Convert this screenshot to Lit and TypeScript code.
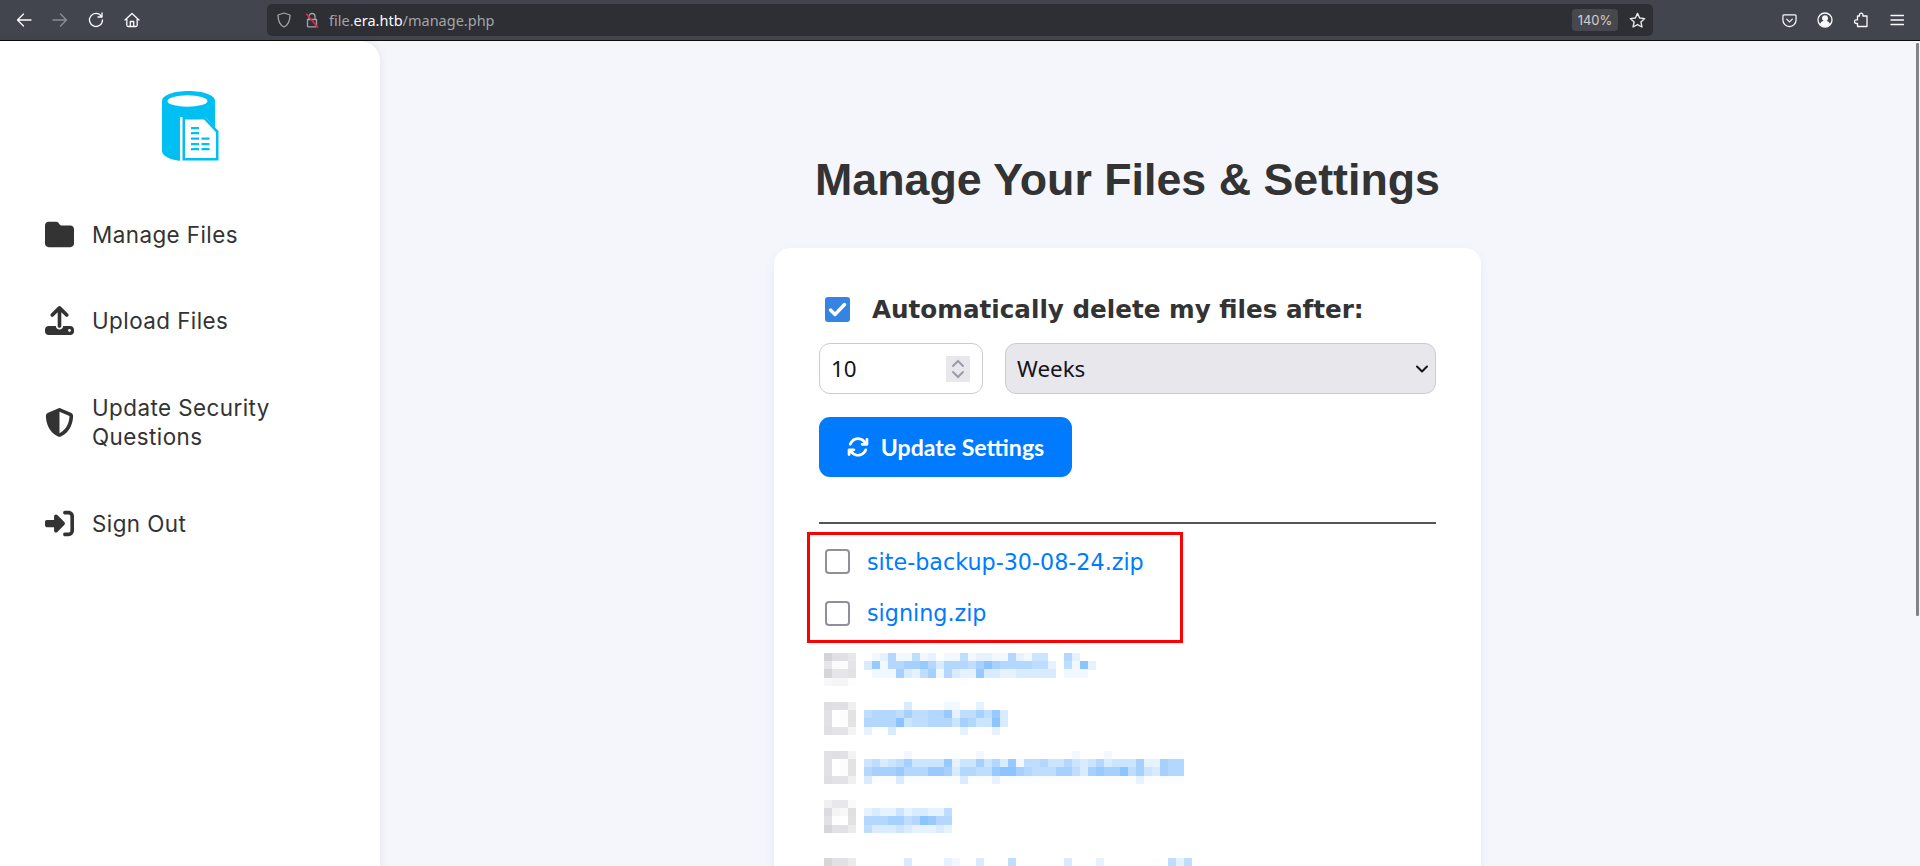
import { LitElement, html, css, svg } from "lit";
import { customElement } from "lit/decorators.js";

const FA = {
  folder: "M64 480H448c35.3 0 64-28.7 64-64V160c0-35.3-28.7-64-64-64H288c-10.1 0-19.6-4.7-25.6-12.8L243.2 57.6C231.1 41.5 212.1 32 192 32H64C28.7 32 0 60.7 0 96V416c0 35.3 28.7 64 64 64z",
  upload: "M288 109.3V352c0 17.7-14.3 32-32 32s-32-14.3-32-32V109.3l-73.4 73.4c-12.5 12.5-32.8 12.5-45.3 0s-12.5-32.8 0-45.3l128-128c12.5-12.5 32.8-12.5 45.3 0l128 128c12.5 12.5 12.5 32.8 0 45.3s-32.8 12.5-45.3 0L288 109.3zM64 352H192c0 35.3 28.7 64 64 64s64-28.7 64-64H448c35.3 0 64 28.7 64 64v32c0 35.3-28.7 64-64 64H64c-35.3 0-64-28.7-64-64V416c0-35.3 28.7-64 64-64zM432 456a24 24 0 1 0 0-48 24 24 0 1 0 0 48z",
  shield: "M256 0c4.6 0 9.2 1 13.4 2.9L457.7 82.8c22 9.3 38.4 31 38.3 57.2c-.5 99.2-41.3 280.7-213.6 363.2c-16.7 8-36.1 8-52.8 0C57.3 420.7 16.5 239.2 16 140c-.1-26.2 16.3-47.9 38.3-57.2L242.7 2.9C246.8 1 251.4 0 256 0zm0 66.8V444.8C394 378 431.1 230.1 432 141.4L256 66.8l0 0z",
  signout: "M217.9 105.9L340.7 228.7c7.2 7.2 11.3 17.1 11.3 27.3s-4.1 20.1-11.3 27.3L217.9 406.1c-6.4 6.4-15 9.9-24 9.9c-18.7 0-33.9-15.2-33.9-33.9l0-62.1L32 320c-17.7 0-32-14.3-32-32l0-64c0-17.7 14.3-32 32-32l128 0 0-62.1c0-18.7 15.2-33.9 33.9-33.9c9 0 17.6 3.6 24 9.9zM352 416l64 0c17.7 0 32-14.3 32-32l0-256c0-17.7-14.3-32-32-32l-64 0c-17.7 0-32-14.3-32-32s14.3-32 32-32l64 0c53 0 96 43 96 96l0 256c0 53-43 96-96 96l-64 0c-17.7 0-32-14.3-32-32s14.3-32 32-32z",
  sync: "M105.1 202.6c7.7-21.8 20.2-42.3 37.8-59.8c62.5-62.5 163.8-62.5 226.3 0L386.3 160H352c-17.7 0-32 14.3-32 32s14.3 32 32 32H463.5c0 0 0 0 0 0h.4c17.7 0 32-14.3 32-32V80c0-17.7-14.3-32-32-32s-32 14.3-32 32v35.2L414.4 97.6c-87.5-87.5-229.3-87.5-316.8 0C73.2 122 55.6 150.7 44.8 181.4c-5.9 16.7 2.9 34.9 19.5 40.8s34.9-2.9 40.8-19.5zM39 289.3c-5 1.5-9.8 4.2-13.7 8.2c-4 4-6.7 8.8-8.1 14c-.3 1.2-.6 2.5-.8 3.8c-.3 1.7-.4 3.4-.4 5.1V432c0 17.7 14.3 32 32 32s32-14.3 32-32V396.9l17.6 17.5 0 0c87.5 87.4 229.3 87.4 316.7 0c24.4-24.4 42.1-53.1 52.9-83.7c5.9-16.7-2.9-34.9-19.5-40.8s-34.9 2.9-40.8 19.5c-7.7 21.8-20.2 42.3-37.8 59.8c-62.5 62.5-163.8 62.5-226.3 0l-.1-.1L125.6 352H160c17.7 0 32-14.3 32-32s-14.3-32-32-32H48.4c-1.6 0-3.2 .1-4.8 .3s-3.1 .5-4.6 1z",
};

// One censored file row: y offset inside the mosaic, gray box tiles, blue intensity lines.
interface Blur { y: number; box: string[][]; text: string[]; }
const g = (s: string) => s.split(" ").map((c) => "#" + c);
const BLURS: Blur[] = [
  { y: 0,
    box: [g("d4d3d8 e0dfe3 e0dfe3 e8e8ea"), g("e6e6e8 fafafa fcfcfc e4e4e6"), g("d6d5da e6e6e8 e6e6e8 e2e2e4"), g("f8f8f8 f5f5f5 f5f5f5 fdfdfd")],
    text: ["012611512011512211621440062", "38166778636665797666655205192", "0111732571632283322333330111", "0000.0000000.00000000000"] },
  { y: 49,
    box: [g("dfdee2 e0dfe3 e0dfe3 f0f0f0"), g("e2e2e4 ffffff fcfcfc e3e3e5"), g("e2e2e4 ffffff fcfcfc e3e3e5"), g("e0e0e3 e4e4e6 e4e4e6 f4f4f4")],
    text: ["000003000011002000", "566657556682557583", "666694556664764493", "200300000000200.20"] },
  { y: 98,
    box: [g("e2e1e4 e0dfe3 e2e1e4 f3f3f3"), g("e2e2e4 ffffff fcfcfc e3e3e5"), g("e2e2e4 ffffff fcfcfc e3e3e5"), g("dfdee2 e3e3e5 e3e3e5 f0f0f0")],
    text: ["0000010000..0010000.000000100010000000..", "4534574444824474638155644643463444722766", "6777866688736655899765557753787795743766", "3...3.......3...2.................2....."] },
  { y: 147,
    box: [g("f0f0f0 e8e8ea e8e8ea fafafa"), g("dcdce0 f4f4f4 f8f8f8 e0e0e3"), g("e2e2e4 fdfdfd ffffff e2e2e4"), g("d6d5da e2e2e4 e2e2e4 ebebec")],
    text: ["", "23224233225", "66677569866", "53334322232"] },
  { y: 205,
    box: [g("d6d5da e2e1e4 e2e1e4 ebebec")],
    text: ["00000300002100300050000003000" + "2" + "000000" + ".0525"] },
];
const blue = (ch: string) => {
  const a = ch === "." ? 0.015 : Number(ch) * 0.05;
  return `rgb(${Math.round(255 * (1 - a))},${Math.round(255 - 132 * a)},255)`;
};

@customElement("blur-list")
class BlurList extends LitElement {
  static styles = css`:host{display:block;height:213px} svg{display:block}`;
  render() {
    const tile = 8, h = 8.17;
    return html`<svg width="632" height="213" viewBox="0 0 632 213" shape-rendering="crispEdges">
      ${BLURS.map((b) => svg`
        ${b.box.map((line, r) => line.map((c, i) => svg`<rect x=${i * tile} y=${b.y + r * h} width=${tile} height=${h + 0.2} fill=${c}></rect>`))}
        ${b.text.map((line, r) => [...line].map((c, i) => c === "0" ? null : svg`<rect x=${40 + i * tile} y=${b.y + r * h} width=${tile} height=${h + 0.2} fill=${blue(c)}></rect>`))}
      `)}
    </svg>`;
  }
}

@customElement("app-root")
export class AppRoot extends LitElement {
  static styles = css`
    :host { display:flex; flex-direction:column; width:1920px; height:866px; overflow:hidden; background:#f4f6fb; position:relative; font-family:"Inter",sans-serif; }
    .chrome { flex:none; height:40px; background:#42454e; border-bottom:1px solid #0c0c0d; display:flex; align-items:center; color:#fbfbfe; }
    .chrome svg { display:block; fill:none; stroke:currentColor; stroke-width:1.3; stroke-linecap:round; stroke-linejoin:round; }
    .nav { display:flex; width:267px; flex:none; padding-left:16px; box-sizing:border-box; gap:20px; }
    .dim { color:#8b8d94; }
    .url { width:1386px; height:32px; flex:none; background:#2e2f34; border-radius:5px; display:flex; align-items:center; font:14.5px "Noto Sans",sans-serif; color:#a3a4a8; box-sizing:border-box; padding-left:9px; }
    .url .sh { margin-right:12px; }
    .url .lk { margin-right:9px; }
    .url b { font-weight:400; color:#fbfbfe; }
    .url .sp { flex:1; }
    .zoom { width:46px; height:22px; background:#47484e; border-radius:4px; font:13px "Inter",sans-serif; color:#cfcfd2; display:flex; align-items:center; justify-content:center; margin-right:11px; }
    .url .star { margin-right:7px; color:#e8e8ea; }
    .tools { flex:1; display:flex; align-items:center; padding-left:129px; gap:20px; }
    .body { flex:1; display:flex; min-height:0; }
    aside { flex:none; width:380px; background:#fff; border-top-right-radius:20px; box-shadow:0 0 10px rgba(0,0,0,.08); box-sizing:border-box; padding:50px 0 0 45px; height:860px; color:#333; }
    .logo { display:block; margin:0 0 0 117px; }
    .menu { display:flex; flex-direction:column; margin-top:59px; }
    .item { display:flex; align-items:center; gap:18px; font-size:22.4px; letter-spacing:.45px; line-height:29px; color:#333; }
    .item svg { width:29px; height:29px; fill:#333; flex:none; }
    .item span { width:240px; }
    .m1 { margin-bottom:57px; }
    .m2 { margin-bottom:58px; }
    .m3 { margin-bottom:58px; }
    main { flex:1; padding:0 45px 0 0; display:flex; flex-direction:column; align-items:center; min-width:0; }
    h1 { flex:none; margin:112px 0 0; font:700 44.75px/52px "Liberation Sans",sans-serif; color:#333; height:95px; }
    .card { position:relative; width:707px; height:800px; flex:none; background:#fff; border-radius:16px; box-shadow:0 4px 12px rgba(0,0,0,.05); box-sizing:border-box; padding:49px 45px 0; }
    .auto { display:flex; align-items:center; height:25px; padding-left:6px; gap:22px; font:700 24.64px "DejaVu Sans",sans-serif; color:#333; white-space:nowrap; }
    .cb { width:25px; height:25px; box-sizing:border-box; border-radius:3px; flex:none; }
    .cb.on { background:#3584e4; display:flex; align-items:center; justify-content:center; }
    .cb.off { border:2px solid #8f8f9d; background:#fff; border-radius:4px; }
    .inputs { display:flex; gap:22px; margin-top:21px; }
    .num,.sel { height:51px; box-sizing:border-box; border:1px solid #ccc; border-radius:11px; display:flex; align-items:center; font:22.4px "Noto Sans",sans-serif; color:#15141a; }
    .num { width:164px; background:#fff; padding:0 12px 0 11px; justify-content:space-between; }
    .spin { width:24px; height:26px; background:#e8e8ec; display:block; }
    .sel { flex:1; background:#e8e8ec; padding:0 5px 0 11px; justify-content:space-between; }
    .btn { margin-top:23px; width:253px; height:60px; background:#007bff; border-radius:11px; color:#fff; display:flex; align-items:center; justify-content:center; gap:12px; font:700 23.1px "Lato",sans-serif; box-sizing:border-box; }
    .btn svg { width:22px; height:22px; fill:#fff; }
    hr { margin:45px 0 0; border:0; height:2px; background:#555; }
    .files { margin-top:12px; display:flex; flex-direction:column; }
    .file { display:flex; align-items:center; height:51.5px; padding-left:6px; gap:17px; font:22.25px "DejaVu Sans",sans-serif; color:#007bff; }
    .mosaic { margin:14px 0 0 5px; }
    .mark { position:absolute; left:33px; top:284px; width:376px; height:111px; box-sizing:border-box; border:3px solid #f00; pointer-events:none; }
    .scroll { position:absolute; right:1px; top:43px; width:3px; height:573px; background:#808488; border-radius:1px; }
  `;

  private ico(d: string, vb = "0 0 512 512") {
    return html`<svg viewBox=${vb}><path d=${d}></path></svg>`;
  }

  render() {
    return html`
      <div class="chrome">
        <div class="nav">
          <svg width="16" height="16" viewBox="0 0 16 16"><path d="M15 8H1.5M7.5 2 1.5 8l6 6"/></svg>
          <svg class="dim" width="16" height="16" viewBox="0 0 16 16"><path d="M1 8h13.5M8.5 2l6 6-6 6"/></svg>
          <svg width="16" height="16" viewBox="0 0 16 16"><path d="M13.5 4.5A6.5 6.5 0 1 0 14.5 8M14 1v4h-4"/></svg>
          <svg width="16" height="16" viewBox="0 0 16 16"><path d="M1 8 8 1.5 15 8M2.8 6.5V13a1.5 1.5 0 0 0 1.5 1.5h7.4a1.5 1.5 0 0 0 1.5-1.5V6.5M6.3 14.5V9.5h3.4v5"/></svg>
        </div>
        <div class="url">
          <svg class="sh" width="16" height="16" viewBox="0 0 16 16"><path d="M8 1 2 3c0 5 .8 9.500 6 12 5.200-2.500 6-7 6-12z"/></svg>
          <svg class="lk" width="16" height="16" viewBox="0 0 16 16"><path d="M5 7V4.500a3 3 0 0 1 6 0V7M3.500 7.500h9v6.500a.8.8 0 0 1-.8.8H4.300a.8.8 0 0 1-.8-.8z"/><path d="M2.500 2 13.500 15" stroke="#e22850" stroke-width="1.600"/></svg>
          <span>file.<b>era.htb</b>/manage.php</span>
          <span class="sp"></span>
          <div class="zoom">140%</div>
          <svg class="star" width="17" height="17" viewBox="0 0 16 16"><path d="M8 1.300 10 5.700l4.800.5-3.600 3.200 1 4.700L8 11.800 3.800 14.100l1-4.700L1.200 6.200 6 5.700z"/></svg>
        </div>
        <div class="tools">
          <svg width="15" height="15" viewBox="0 0 16 16"><path d="M2 2h12a1 1 0 0 1 1 1v4.500a7 7 0 0 1-14 0V3a1 1 0 0 1 1-1zM5 6.500l3 3 3-3"/></svg>
          <svg width="16" height="16" viewBox="0 0 16 16"><circle cx="8" cy="8" r="7"/><circle cx="8" cy="6.200" r="2.300" fill="currentColor"/><path d="M3.500 12.200c1-2 2.500-2.700 4.500-2.700s3.500.7 4.500 2.700c-2.500 2.400-6.500 2.400-9 0z" fill="currentColor"/></svg>
          <svg width="16" height="16" viewBox="0 0 16 16"><path d="M6.500 2.800a1.700 1.700 0 0 1 3.400 0V4H14v10.500H4.500V11.500H3.300a1.800 1.800 0 0 1 0-3.600h1.200V4h2z"/></svg>
          <svg width="16" height="16" viewBox="0 0 16 16"><path d="M2 3.500h12.500M2 8h12.500M2 12.500h12.500"/></svg>
        </div>
      </div>
      <div class="body">
        <aside>
          <svg class="logo" width="57" height="70" viewBox="0 0 57 70">
            <path fill="#00bff3" d="M0 10C0 4 12 0 26.500 0S53 4 53 10V60L20 70C8 69 0 65 0 60z"/>
            <ellipse cx="25.500" cy="10" rx="20" ry="5.800" fill="#fff"/>
            <path fill="#fff" d="M18 26H43L57 41V70H18z"/>
            <path fill="#00bff3" fill-rule="evenodd" d="M20.500 26H43L56.500 40V69.500H20.500zM23 28.500V67H54V41.200L42 28.500z"/>
            <path fill="#00bff3" d="M29 36h8v2.200h-8zM29 41h8v2.200h-8zM29 46.500h8v2.200h-8zM39.500 46.500h8v2.200h-8zM29 52h8v2.200h-8zM39.500 52h8v2.200h-8zM29 57h8v2.200h-8zM39.500 57h8v2.200h-8z"/>
          </svg>
          <div class="menu">
            <div class="item m1">${this.ico(FA.folder)}<span>Manage Files</span></div>
            <div class="item m2">${this.ico(FA.upload)}<span>Upload Files</span></div>
            <div class="item m3">${this.ico(FA.shield)}<span>Update Security Questions</span></div>
            <div class="item">${this.ico(FA.signout)}<span>Sign Out</span></div>
          </div>
        </aside>
        <main>
          <h1>Manage Your Files &amp; Settings</h1>
          <div class="card">
            <div class="auto">
              <div class="cb on"><svg width="19" height="19" viewBox="0 0 19 19" fill="none" stroke="#fff" stroke-width="3.400" stroke-linecap="round" stroke-linejoin="round"><path d="M2.500 10 7 14.500 16.500 4.500"/></svg></div>
              <span>Automatically delete my files after:</span>
            </div>
            <div class="inputs">
              <div class="num"><span>10</span>
                <svg class="spin" viewBox="0 0 24 26" fill="none" stroke="#9d9ba8" stroke-width="2" stroke-linecap="round"><path d="M7 10l5-5 5 5M7 16l5 5 5-5"/></svg>
              </div>
              <div class="sel"><span>Weeks</span>
                <svg width="16" height="16" viewBox="0 0 16 16" fill="none" stroke="#15141a" stroke-width="2" stroke-linecap="round" stroke-linejoin="round"><path d="M3 5.500 8 10.500 13 5.500"/></svg>
              </div>
            </div>
            <div class="btn">${this.ico(FA.sync)}<span>Update Settings</span></div>
            <hr />
            <div class="files">
              <div class="file"><div class="cb off"></div><span>site-backup-30-08-24.zip</span></div>
              <div class="file"><div class="cb off"></div><span>signing.zip</span></div>
              <blur-list class="mosaic"></blur-list>
            </div>
            <div class="mark"></div>
          </div>
        </main>
      </div>
      <div class="scroll"></div>
    `;
  }
}
